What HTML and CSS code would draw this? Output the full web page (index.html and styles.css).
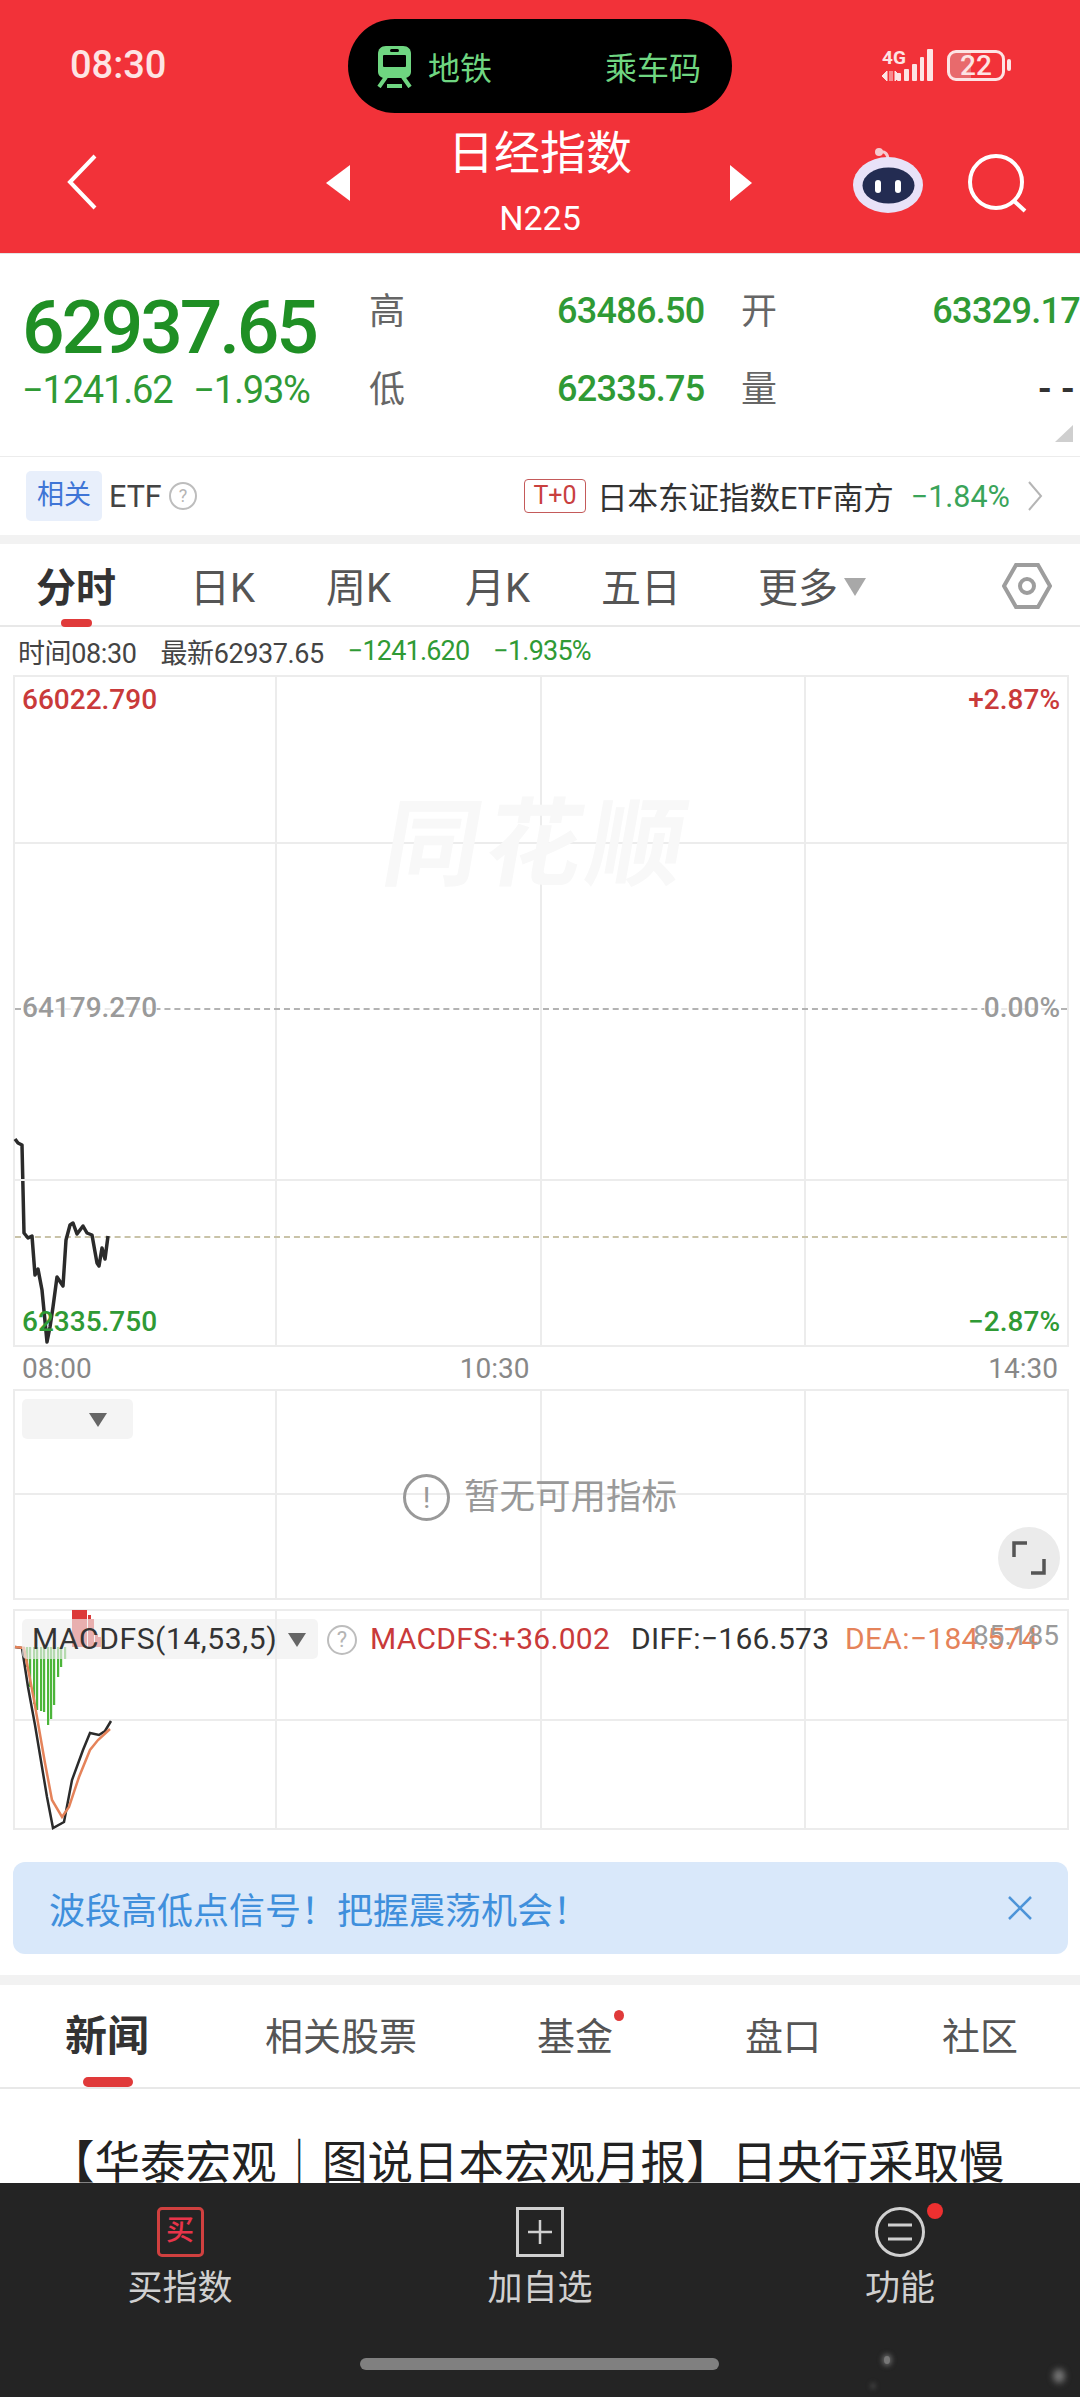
FILE: index.html
```html
<!DOCTYPE html>
<html>
    <head>
        <meta charset="utf-8">
        <title>日经指数</title>
        <link rel="stylesheet" href="styles.css">
    </head>

    <body>
        <!-- Red header -->
        <div class="header">
            <div class="statusbar">
                <div class="clock">08:30</div>
                <div class="island">
                    <svg class="train" width="35" height="42" viewBox="0 0 35 42">
                        <path fill="#6fd681" d="M9 0h17c5 0 8 3 8 8v18c0 3-2 5-5 6H6c-3-1-5-3-5-6V8c0-5 3-8 8-8z"/>
                        <rect x="6" y="9" width="23" height="12" rx="1" fill="#000"/>
                        <rect x="13" y="3" width="9" height="3" rx="1.5" fill="#000"/>
                        <path d="M9 31L2 41M26 31l7 10" stroke="#6fd681" stroke-width="4"/>
                        <rect x="10" y="38" width="15" height="4" fill="#6fd681"/>
                    </svg>
                    <span class="island-text">地铁</span>
                    <span class="island-text island-right">乘车码</span>
                </div>
                <div class="status-icons">
                    <div class="net">
                        <span class="net-label">4G</span>
                        <svg width="18" height="10" viewBox="0 0 18 10"><path d="M5 0v10L0 5zM8 0v10M10 0v10M13 0l5 5-5 5z" fill="#fde4e4" stroke="#fde4e4" stroke-width="1"/></svg>
                    </div>
                    <svg class="signal" width="36" height="32" viewBox="0 0 36 32">
                        <rect x="0" y="24" width="4" height="8" rx="1" fill="#fde4e4"/>
                        <rect x="7" y="20" width="5" height="12" rx="1" fill="#fde4e4"/>
                        <rect x="15" y="15" width="5" height="17" rx="1" fill="#fde4e4"/>
                        <rect x="23" y="8" width="4" height="24" rx="1" fill="#fde4e4"/>
                        <rect x="30" y="0" width="6" height="32" rx="1" fill="#fde4e4"/>
                    </svg>
                    <div class="battery"><span>22</span></div>
                    <div class="battery-cap"></div>
                </div>
            </div>
            <div class="titlebar">
                <svg class="back" width="32" height="56" viewBox="0 0 32 56"><path d="M29 2L4 28l25 26" fill="none" stroke="#fff" stroke-width="4"/></svg>
                <div class="arrow-left"></div>
                <div class="title-block">
                    <div class="title">日经指数</div>
                    <div class="code">N225</div>
                </div>
                <div class="arrow-right"></div>
                <svg class="robot" width="72" height="66" viewBox="0 0 72 66">
                    <path d="M28 4c5-1 8 2 8 8" fill="none" stroke="#f6c9cf" stroke-width="3"/>
                    <circle cx="27" cy="4" r="4" fill="#f6c9cf"/>
                    <ellipse cx="36" cy="37" rx="35" ry="28" fill="#e8e2f8"/>
                    <ellipse cx="36.5" cy="37.5" rx="26" ry="18" fill="#232c52"/>
                    <rect x="23" y="32" width="6" height="13" rx="3" fill="#fff"/>
                    <rect x="43" y="32" width="6" height="13" rx="3" fill="#fff"/>
                </svg>
                <svg class="search" width="60" height="60" viewBox="0 0 60 60">
                    <circle cx="29" cy="29" r="26" fill="none" stroke="#fff" stroke-width="4"/>
                    <path d="M47 48l11 10" stroke="#fff" stroke-width="4"/>
                </svg>
            </div>
        </div>

        <!-- Quote numbers -->
        <div class="quote">
            <div class="quote-main">
                <div class="price">62937.65</div>
                <div class="change"><span>−1241.62</span><span>−1.93%</span></div>
            </div>
            <div class="quote-grid">
                <span class="q-label">高</span><span class="q-val">63486.50</span>
                <span class="q-label">开</span><span class="q-val">63329.17</span>
                <span class="q-label">低</span><span class="q-val">62335.75</span>
                <span class="q-label">量</span><span class="q-val q-dark">--</span>
            </div>
            <div class="corner"></div>
        </div>

        <!-- ETF row -->
        <div class="etf">
            <span class="etf-tag">相关</span>
            <span class="etf-name">ETF</span>
            <span class="help help-small">?</span>
            <span class="etf-t0">T+0</span>
            <span class="etf-fund">日本东证指数ETF南方</span>
            <span class="etf-pct">−1.84%</span>
            <svg class="etf-more" width="16" height="30" viewBox="0 0 16 30"><path d="M2 1l12 14L2 29" fill="none" stroke="#b5b5b5" stroke-width="2"/></svg>
        </div>

        <div class="gap"></div>

        <!-- Period tabs -->
        <div class="periods">
            <div class="period period-on">分时</div>
            <div class="period">日K</div>
            <div class="period">周K</div>
            <div class="period">月K</div>
            <div class="period">五日</div>
            <div class="period period-more">更多<i class="tri"></i></div>
            <svg class="hex" width="50" height="46" viewBox="0 0 50 46">
                <path d="M14 2h22l12 21-12 21H14L2 23z" fill="none" stroke="#9d9d9d" stroke-width="4"/>
                <circle cx="25" cy="23" r="7" fill="none" stroke="#9d9d9d" stroke-width="4"/>
            </svg>
        </div>

        <div class="infoline">
            <span>时间08:30</span>
            <span>最新62937.65</span>
            <span class="green">−1241.620</span>
            <span class="green">−1.935%</span>
        </div>

        <!-- Main time chart -->
        <div class="chart chart-main">
            <div class="logo-mark">同花顺</div>
            <div class="midline"></div>
            <div class="avgline"></div>
            <svg class="plot" width="1056" height="672" viewBox="13 675 1056 672">
                <polyline fill="none" stroke="#2b2b2b" stroke-width="3.5" stroke-linejoin="round"
                    points="15,1139 18,1143 22,1145 24,1233 28,1238 32,1236 35,1275 38,1269 42,1290 47,1342 50,1327 53,1307 57,1277 63,1286 66,1240 70,1225 73,1223 77,1234 83,1226 87,1233 92,1235 97,1263 99,1266 102,1248 105,1259 108,1236"/>
            </svg>
            <span class="axis a-tl red">66022.790</span>
            <span class="axis a-tr red">+2.87%</span>
            <span class="axis a-ml gray">64179.270</span>
            <span class="axis a-mr gray">0.00%</span>
            <span class="axis a-bl green">62335.750</span>
            <span class="axis a-br green">−2.87%</span>
        </div>
        <div class="timeaxis">
            <span>08:00</span>
            <span class="time-mid">10:30</span>
            <span class="time-end">14:30</span>
        </div>

        <!-- Empty indicator chart -->
        <div class="chart chart-empty">
            <div class="picker picker-blank"><i class="tri-dark"></i></div>
            <div class="noind">
                <span class="help help-big">!</span>
                <span>暂无可用指标</span>
            </div>
            <div class="expand">
                <svg width="34" height="34" viewBox="0 0 34 34"><path d="M2 16V2h13M32 18v14H19" fill="none" stroke="#555" stroke-width="3.5"/></svg>
            </div>
        </div>

        <!-- MACD chart -->
        <div class="chart chart-macd">
            <svg class="plot" width="1056" height="221" viewBox="13 1609 1056 221">
                <g id="bars"></g>
                <polyline fill="none" stroke="#2b2b2b" stroke-width="2.5"
                    points="15,1647 22,1648 28,1687 35,1725 47,1797 53,1828 64,1822 72,1780 83,1750 90,1733 99,1735 105,1731 111,1721"/>
                <polyline fill="none" stroke="#e5835a" stroke-width="2.5"
                    points="15,1647 24,1648 34,1700 45,1763 52,1800 62,1817 69,1807 79,1777 90,1750 98,1740 110,1729"/>
            </svg>
            <div class="picker picker-macd">MACDFS(14,53,5)<i class="tri-dark"></i></div>
            <span class="help help-macd">?</span>
            <span class="macd-val v-macd">MACDFS:+36.002</span>
            <span class="macd-val v-diff">DIFF:−166.573</span>
            <span class="macd-val v-dea">DEA:−184.574</span>
            <span class="macd-max">85.185</span>
        </div>

        <!-- Promo banner -->
        <div class="banner">
            <span>波段高低点信号！把握震荡机会！</span>
            <svg width="26" height="26" viewBox="0 0 26 26"><path d="M2 2l22 22M24 2L2 24" stroke="#4d94d8" stroke-width="2.5"/></svg>
        </div>

        <div class="gap gap-news"></div>

        <!-- News tabs -->
        <div class="newstabs">
            <div class="ntab ntab-on">新闻</div>
            <div class="ntab">相关股票</div>
            <div class="ntab ntab-dot">基金</div>
            <div class="ntab">盘口</div>
            <div class="ntab">社区</div>
        </div>
        <div class="headline">【华泰宏观｜图说日本宏观月报】日央行采取慢</div>

        <!-- Bottom bar -->
        <div class="bottombar">
            <div class="actions">
                <div class="action">
                    <div class="buy-icon">买</div>
                    <div class="action-label">买指数</div>
                </div>
                <div class="action">
                    <svg width="48" height="50" viewBox="0 0 48 50">
                        <rect x="1.5" y="1.5" width="45" height="47" fill="none" stroke="#d0d0d0" stroke-width="3"/>
                        <path d="M24 13v24M12 25h24" stroke="#d0d0d0" stroke-width="2.5"/>
                    </svg>
                    <div class="action-label">加自选</div>
                </div>
                <div class="action action-fn">
                    <svg width="50" height="50" viewBox="0 0 50 50">
                        <circle cx="25" cy="25" r="23.5" fill="none" stroke="#d0d0d0" stroke-width="3"/>
                        <path d="M13 18h24M13 32h24" stroke="#d0d0d0" stroke-width="3"/>
                    </svg>
                    <div class="action-label">功能</div>
                </div>
            </div>
            <div class="homebar"></div>
            <div class="smudge"></div>
        </div>

        <script>
            // MACD histogram bars in page pixels, zero line at y=1647
            var zero = 1647;
            var green = [[26, 20], [29, 40], [33, 57], [36, 63], [40, 64], [43, 65], [47, 78], [50, 72], [53, 58], [57, 30], [60, 20], [64, 12]];
            var red = [[72, 37], [75, 37], [78, 37], [81, 37], [84, 37], [88, 32], [91, 28], [95, 13], [98, 10], [102, 7]];
            var html = '';
            green.forEach(function (b) {
                html += '<rect x="' + b[0] + '" y="' + zero + '" width="2.2" height="' + b[1] + '" fill="#4cb53a"/>';
            });
            red.forEach(function (b) {
                html += '<rect x="' + b[0] + '" y="' + (zero - b[1]) + '" width="3" height="' + b[1] + '" fill="#dc3a3a"/>';
            });
            document.getElementById('bars').innerHTML = html;
        </script>
    </body>
</html>
```

FILE: styles.css
```css
/* Page */
body {
    margin: 0;
    width: 1080px;
    height: 2397px;
    overflow: hidden;
    position: relative;
    background-color: #fff;
    font-family: Roboto, "Noto Sans CJK SC", sans-serif;
    color: #333;
}
.red { color: #c93a3a; }
.green { color: #2f9a35; }
.gray { color: #9a9a9a; }

/* Header */
.header {
    background-color: #f23239;
    height: 253px;
    border-bottom: 1px solid #e4e4e4;
}
.statusbar {
    height: 113px;
    display: flex;
    align-items: flex-start;
    padding-top: 19px;
    box-sizing: border-box;
}
.clock {
    margin: 27px 0 0 70px;
    width: 278px;
    font-size: 38px;
    font-weight: 500;
    line-height: 38px;
    color: #fde4e4;
}
.island {
    width: 384px;
    height: 94px;
    border-radius: 47px;
    background-color: #000;
    display: flex;
    align-items: center;
    padding: 0 31px 0 29px;
    box-sizing: border-box;
}
.train { margin-top: 2px; }
.island-text {
    margin-left: 16px;
    font-size: 32px;
    color: #6fd681;
}
.island-right { margin-left: auto; }
.status-icons {
    margin: 26px 0 0 150px;
    display: flex;
    align-items: center;
    height: 40px;
}
.net {
    display: flex;
    flex-direction: column;
    width: 22px;
    align-items: flex-start;
    gap: 5px;
}
.net-label {
    font-size: 19px;
    line-height: 17px;
    font-weight: 700;
    color: #fde4e4;
}
.signal { margin-left: -7px; }
.battery {
    margin-left: 14px;
    width: 58px;
    height: 31px;
    box-sizing: border-box;
    border: 3px solid #fde4e4;
    border-radius: 9px;
    background: linear-gradient(to right, #e86a6c 40%, transparent 40%);
    text-align: center;
    font-size: 28px;
    line-height: 25px;
    font-weight: 500;
    color: #fde4e4;
}
.battery-cap {
    margin-left: 2px;
    width: 4px;
    height: 12px;
    border-radius: 2px;
    background-color: #fde4e4;
}
.titlebar {
    height: 140px;
    display: flex;
    align-items: center;
}
.back { margin: -3px 0 0 66px; }
.arrow-left, .arrow-right {
    width: 0;
    height: 0;
    border-top: 18px solid transparent;
    border-bottom: 18px solid transparent;
}
.arrow-left {
    border-right: 24px solid #fff;
    margin-left: 228px;
}
.arrow-right {
    border-left: 22px solid #fff;
}
.title-block {
    width: 380px;
    text-align: center;
    margin-top: -5px;
}
.title {
    font-size: 46px;
    line-height: 60px;
    color: #fff;
}
.code {
    font-size: 34px;
    line-height: 40px;
    margin-top: 15px;
    color: #fff;
}
.robot { margin: -4px 0 0 100px; }
.search { margin: 0 0 0 43px; }

/* Quote */
.quote {
    height: 203px;
    position: relative;
    display: flex;
    border-bottom: 1px solid #ececec;
    box-sizing: border-box;
}
.quote-main { padding: 28px 0 0 22px; width: 369px; box-sizing: border-box; }
.price {
    font-size: 75px;
    line-height: 90px;
    font-weight: 500;
    letter-spacing: -3.2px;
    color: #1f8f24;
}
.change {
    display: flex;
    gap: 21px;
    margin-top: -4px;
    font-size: 38px;
    line-height: 44px;
    letter-spacing: -1.2px;
    color: #2f9a35;
}
.quote-grid {
    margin-top: 17px;
    display: grid;
    grid-template-columns: 188px 146px 228px 149px;
    grid-auto-rows: 78px;
    align-items: center;
}
.q-label {
    font-size: 36px;
    margin-top: -5px;
    color: #666;
}
.q-label:nth-child(3), .q-label:nth-child(7) { margin-left: 38px; }
.q-val {
    font-size: 36px;
    font-weight: 500;
    letter-spacing: -0.7px;
    text-align: right;
    margin-top: 2px;
    color: #2f9a35;
    white-space: nowrap;
}
.q-dark { color: #333; font-weight: 700; letter-spacing: 9px; margin-right: -4px; }
.corner {
    position: absolute;
    right: 7px;
    bottom: 14px;
    width: 0;
    height: 0;
    border-left: 18px solid transparent;
    border-bottom: 17px solid #cfcfcf;
}

/* ETF row */
.etf {
    height: 78px;
    display: flex;
    align-items: center;
    padding-left: 26px;
    font-size: 30.5px;
}
.etf-tag {
    width: 76px;
    height: 50px;
    line-height: 48px;
    text-align: center;
    border-radius: 5px;
    background-color: #e8effb;
    color: #3f75d6;
    font-size: 27px;
}
.etf-name { margin-left: 7px; width: 52px; color: #444; }
.help {
    display: inline-block;
    border: 2px solid #bdbdbd;
    border-radius: 50%;
    text-align: center;
    color: #b5b5b5;
    box-sizing: border-box;
}
.help-small {
    margin-left: 8px;
    width: 28px;
    height: 28px;
    line-height: 24px;
    font-size: 18px;
}
.etf-t0 {
    margin-left: 327px;
    width: 62px;
    height: 34px;
    line-height: 32px;
    box-sizing: border-box;
    border: 1px solid #c45a5a;
    border-radius: 4px;
    text-align: center;
    font-size: 25px;
    color: #c9403f;
}
.etf-fund { margin-left: 11px; color: #333; white-space: nowrap; }
.etf-pct { margin-left: 17px; color: #3aa45a; }
.etf-more { margin-left: 17px; }
.gap {
    height: 9px;
    background-color: #f2f2f2;
}

/* Period tabs */
.periods {
    height: 83px;
    position: relative;
    border-bottom: 2px solid #e8e8e8;
    box-sizing: border-box;
    font-size: 40px;
    color: #555;
}
.period { position: absolute; top: 21px; line-height: 48px; }
.period:nth-child(1) { left: 36px; }
.period:nth-child(2) { left: 190px; }
.period:nth-child(3) { left: 326px; }
.period:nth-child(4) { left: 465px; }
.period:nth-child(5) { left: 601px; }
.period:nth-child(6) { left: 758px; }
.period-on {
    font-weight: 700;
    color: #333;
}
.period-on::after {
    content: "";
    position: absolute;
    left: 25px;
    top: 54px;
    width: 31px;
    height: 8px;
    border-radius: 4px;
    background-color: #e03a3a;
}
.tri {
    display: inline-block;
    margin-left: 6px;
    border-left: 11px solid transparent;
    border-right: 11px solid transparent;
    border-top: 18px solid #a8a8a8;
    vertical-align: 6px;
}
.hex { position: absolute; left: 1002px; top: 19px; }

.infoline {
    height: 48px;
    display: flex;
    align-items: center;
    padding-left: 18px;
    gap: 24px;
    font-size: 27px;
    color: #444;
    letter-spacing: -0.4px;
}
.infoline .green { letter-spacing: -0.8px; }

/* Charts */
.chart {
    position: relative;
    margin-left: 13px;
    width: 1056px;
    box-sizing: border-box;
    border: 2px solid #ececec;
    background-image:
        linear-gradient(#ececec, #ececec),
        linear-gradient(#ececec, #ececec),
        linear-gradient(#ececec, #ececec);
    background-size: 2px 100%;
    background-repeat: no-repeat;
    background-position: 260px 0, 525px 0, 789px 0;
}
.chart-main { height: 672px; }
.chart-empty { height: 211px; }
.chart-macd { height: 221px; margin-top: 9px; }
.plot { position: absolute; left: -2px; top: -2px; }
.logo-mark {
    position: absolute;
    left: 370px;
    top: 118px;
    font-size: 96px;
    line-height: 100px;
    font-weight: 700;
    letter-spacing: 6px;
    color: #f8f8f8;
    transform: skewX(-10deg);
}
.chart-main::before, .chart-main::after {
    content: "";
    position: absolute;
    left: 0;
    right: 0;
    height: 2px;
    background-color: #ececec;
}
.chart-main::before { top: 165px; }
.chart-main::after { top: 502px; }
.midline {
    position: absolute;
    left: 0;
    right: 0;
    top: 331px;
    border-top: 2px dashed #b3b3b3;
}
.avgline {
    position: absolute;
    left: 0;
    right: 0;
    top: 559px;
    border-top: 2px dashed #c9c3a8;
}
.axis {
    position: absolute;
    font-size: 28px;
    line-height: 30px;
    font-weight: 500;
    background-color: rgba(255, 255, 255, 0.7);
}
.a-tl { left: 7px; top: 8px; }
.a-tr { right: 7px; top: 8px; }
.a-ml { left: 7px; top: 316px; }
.a-mr { right: 7px; top: 316px; }
.a-bl { left: 7px; top: 630px; background: none; }
.a-br { right: 7px; top: 630px; }
.timeaxis {
    height: 42px;
    display: flex;
    align-items: center;
    padding: 0 22px;
    font-size: 28px;
    color: #888;
}
.time-mid { margin-left: 368px; }
.time-end { margin-left: auto; }
.chart-empty::before, .chart-macd::before {
    content: "";
    position: absolute;
    left: 0;
    right: 0;
    top: 102px;
    height: 2px;
    background-color: #ececec;
}
.chart-macd::before { top: 108px; }
.picker {
    position: absolute;
    left: 7px;
    top: 8px;
    height: 40px;
    border-radius: 5px;
    background-color: rgba(238, 238, 238, 0.65);
}
.picker-blank { width: 111px; }
.tri-dark {
    position: absolute;
    right: 26px;
    top: 14px;
    border-left: 9px solid transparent;
    border-right: 9px solid transparent;
    border-top: 14px solid #666;
}
.picker-macd .tri-dark { right: 12px; }
.noind {
    position: absolute;
    left: 388px;
    top: 82px;
    display: flex;
    align-items: center;
    gap: 14px;
    font-size: 35.5px;
    line-height: 48px;
    color: #999;
}
.help-big {
    width: 47px;
    height: 47px;
    line-height: 42px;
    font-size: 30px;
    border: 3px solid #999;
    color: #999;
}
.expand {
    position: absolute;
    left: 983px;
    top: 136px;
    width: 62px;
    height: 62px;
    border-radius: 50%;
    background-color: #ebebeb;
    display: flex;
    align-items: center;
    justify-content: center;
}
.picker-macd {
    width: 296px;
    padding-left: 10px;
    box-sizing: border-box;
    font-size: 30px;
    line-height: 40px;
    letter-spacing: 0.6px;
    color: #333;
}
.help-macd {
    position: absolute;
    left: 312px;
    top: 14px;
    width: 30px;
    height: 30px;
    line-height: 26px;
    font-size: 22px;
}
.macd-val {
    position: absolute;
    top: 8px;
    font-size: 30px;
    line-height: 40px;
    letter-spacing: 0.3px;
}
.v-macd { left: 355px; color: #c93a3a; }
.v-diff { left: 616px; color: #333; }
.v-dea { left: 830px; color: #e5835a; }
.macd-max {
    position: absolute;
    right: 8px;
    top: 10px;
    font-size: 28px;
    line-height: 30px;
    color: #9a9a9a;
}

/* Banner */
.banner {
    margin: 32px 0 0 13px;
    width: 1055px;
    height: 92px;
    border-radius: 12px;
    background-color: #d9e8fa;
    display: flex;
    align-items: center;
    justify-content: space-between;
    padding: 0 35px 0 36px;
    box-sizing: border-box;
    font-size: 36px;
    color: #3f8fdc;
}
.gap-news { margin-top: 21px; height: 10px; }

/* News tabs */
.newstabs {
    height: 104px;
    position: relative;
    border-bottom: 2px solid #e8e8e8;
    box-sizing: border-box;
    font-size: 38px;
    color: #555;
}
.ntab { position: absolute; top: 28px; line-height: 48px; white-space: nowrap; }
.ntab:nth-child(1) { left: 65px; }
.ntab:nth-child(2) { left: 265px; }
.ntab:nth-child(3) { left: 537px; }
.ntab:nth-child(4) { left: 745px; }
.ntab:nth-child(5) { left: 942px; }
.ntab-on { font-size: 42px; font-weight: 700; color: #333; }
.ntab-on::after {
    content: "";
    position: absolute;
    left: 18px;
    top: 64px;
    width: 50px;
    height: 10px;
    border-radius: 5px;
    background-color: #e03a3a;
}
.ntab-dot::after {
    content: "";
    position: absolute;
    right: -11px;
    top: -3px;
    width: 10px;
    height: 11px;
    border-radius: 50%;
    background-color: #e03a3a;
}
.headline {
    margin-top: 47px;
    padding-left: 49px;
    font-size: 45.5px;
    line-height: 56px;
    color: #222;
    white-space: nowrap;
}

/* Bottom bar */
.bottombar {
    position: absolute;
    left: 0;
    right: 0;
    bottom: 0;
    height: 214px;
    background-color: #242424;
}
.actions {
    display: flex;
    padding-top: 24px;
}
.action {
    width: 360px;
    display: flex;
    flex-direction: column;
    align-items: center;
    position: relative;
    color: #d0d0d0;
}
.action-label {
    margin-top: 9px;
    font-size: 35px;
    line-height: 46px;
}
.buy-icon {
    width: 47px;
    height: 50px;
    box-sizing: border-box;
    border: 3px solid #d0403f;
    border-radius: 5px;
    text-align: center;
    font-size: 28px;
    line-height: 42px;
    font-weight: 500;
    color: #e8344a;
}
.action-fn::after {
    content: "";
    position: absolute;
    left: 207px;
    top: -4px;
    width: 16px;
    height: 16px;
    border-radius: 50%;
    background-color: #ee3030;
}
.homebar {
    position: absolute;
    left: 360px;
    top: 175px;
    width: 359px;
    height: 12px;
    border-radius: 6px;
    background-color: #808080;
}
/* faint blurred corner marks left on the screenshot */
.smudge {
    position: absolute;
    left: 884px;
    top: 173px;
    width: 6px;
    height: 8px;
    border-radius: 50%;
    background-color: #777;
    box-shadow: -14px 26px 5px -1px #555, 172px 16px 6px 3px #777, 0 0 5px 2px #666;
}
```
